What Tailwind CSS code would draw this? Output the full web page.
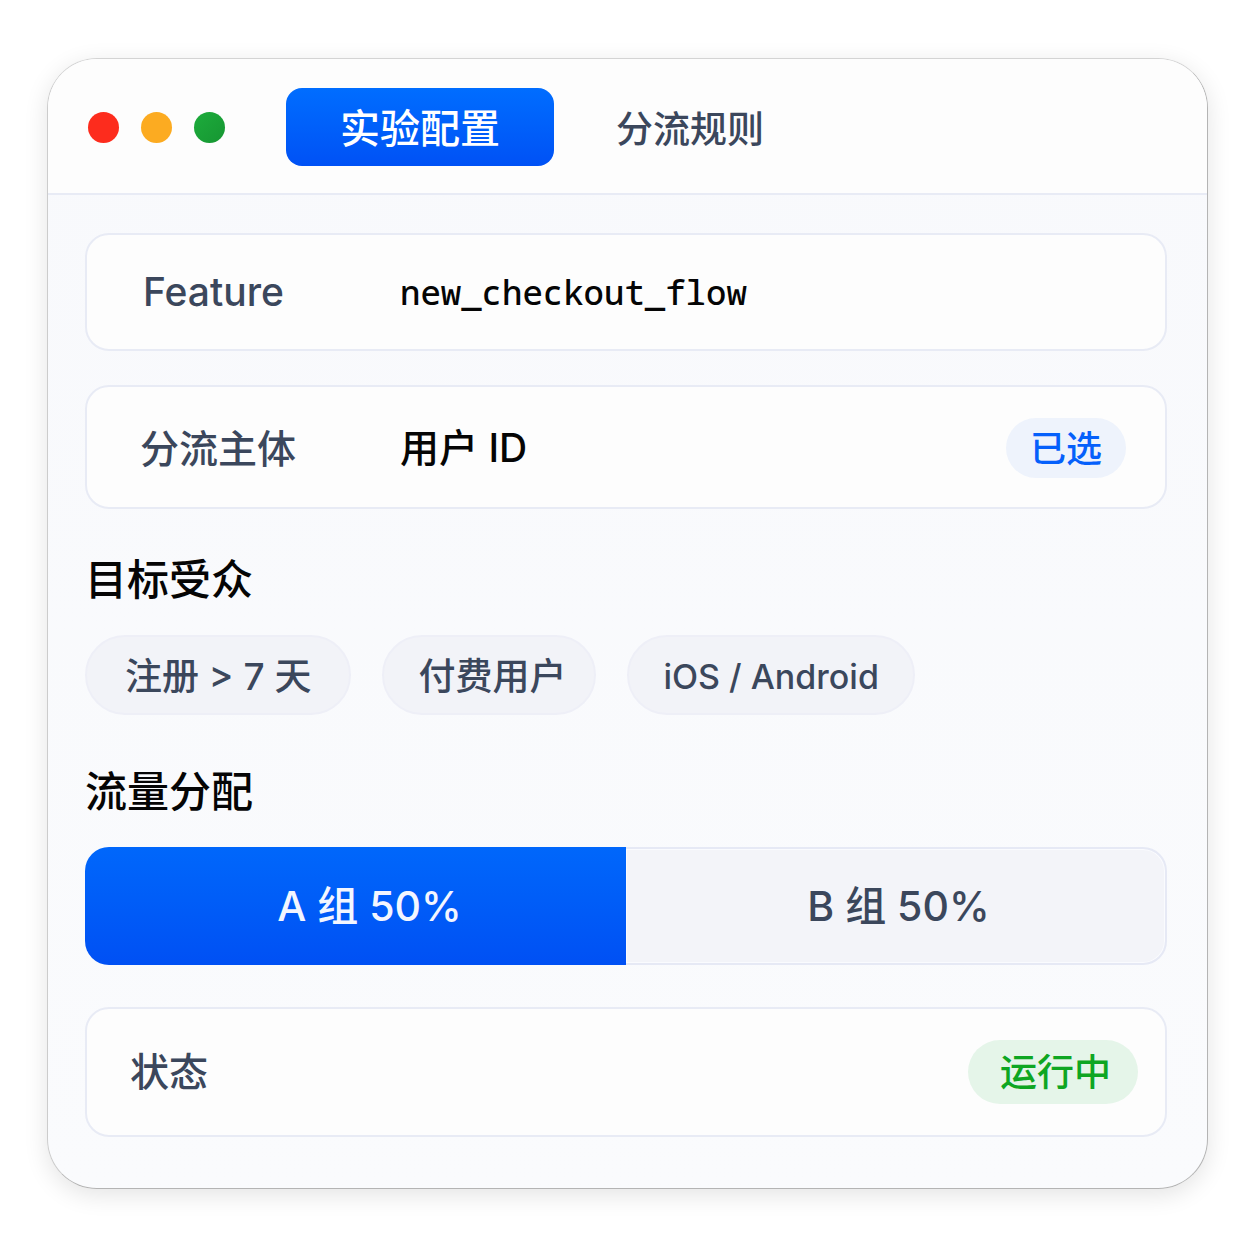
<!DOCTYPE html>
<html lang="zh-CN">
<head>
    <meta charset="UTF-8">
    <meta name="viewport" content="width=device-width, initial-scale=1.0">
    <title>实验配置</title>
    <script src="https://cdn.jsdelivr.net/npm/@tailwindcss/browser@4"></script>
</head>

<body class="min-h-screen bg-white pt-[58px] pr-[46px] pb-16 pl-[47px] font-[Inter,'Noto_Sans_CJK_SC',sans-serif] font-medium text-[#3b475c]">
    <div class="overflow-hidden rounded-[50px] border border-t-[#d4d4d4] border-r-[#b4b4b4] border-b-[#b4b4b4] border-l-[#cccccc] bg-linear-to-b from-[#f8f9fc] to-[#fafbfd] shadow-[0_6px_24px_rgba(0,0,0,0.11)]">
        <header class="flex items-center border-b-2 border-[#e8ebf5] bg-[#fdfdfd] px-10 pt-[29px] pb-[27px]">
            <div class="flex gap-[22px]">
                <span class="size-[31px] rounded-full bg-[#fd2c1d]"></span>
                <span class="size-[31px] rounded-full bg-[#fcab21]"></span>
                <span class="size-[31px] rounded-full bg-linear-to-br from-[#1dac3c] to-[#169632]"></span>
            </div>
            <nav class="ml-[61px] flex">
                <button type="button" class="h-[78px] rounded-2xl bg-linear-to-b from-[#006dff] to-[#0051f5] px-[54px] pt-1 text-[40px] leading-12 text-white">实验配置</button>
                <button type="button" class="h-[78px] px-[62px] pt-1.5 text-[37px] leading-12">分流规则</button>
            </nav>
        </header>

        <main class="pt-[38px] pr-10 pb-[51px] pl-[37px]">
            <dl>
                <div class="flex h-[118px] items-center rounded-3xl border-2 border-[#e8ebf5] bg-[#fdfdfd] px-14">
                    <dt class="w-[257px] text-[39px] leading-12">Feature</dt>
                    <dd class="font-['Noto_Sans_Mono','DejaVu_Sans_Mono',monospace] text-[34px] leading-12 text-[#050505]">new_checkout_flow</dd>
                </div>
                <div class="mt-[34px] flex h-[124px] items-center rounded-3xl border-2 border-[#e8ebf5] bg-[#fdfdfd] pr-[39px] pl-[53px]">
                    <dt class="w-[260px] pt-1 text-[39px] leading-12">分流主体</dt>
                    <dd class="flex flex-1 items-center justify-between pt-0.5 text-[39px] leading-12 text-[#050505]">
                        用户 ID
                        <span class="rounded-full bg-[#eef3fc] px-6 pt-[7px] pb-[5px] text-[36px] text-[#0560fb]">已选</span>
                    </dd>
                </div>
            </dl>

            <h2 class="mt-[47px] text-[42px] leading-12 text-[#050505]">目标受众</h2>
            <ul class="mt-[31px] flex gap-[31px] text-[37px] leading-12">
                <li class="rounded-full border-2 border-[#eeeff7] bg-[#f2f3f8] px-[38px] py-3.5 pt-4 pb-3">注册 &gt; 7 天</li>
                <li class="rounded-full border-2 border-[#eeeff7] bg-[#f2f3f8] pr-7 pl-[34px] pt-4 pb-3">付费用户</li>
                <li class="rounded-full border-2 border-[#eeeff7] bg-[#f2f3f8] px-[34px] pt-4 pb-3 text-[34px] leading-12">iOS / Android</li>
            </ul>

            <h2 class="mt-[53px] text-[42px] leading-12 text-[#050505]">流量分配</h2>
            <div class="mt-[31px] flex h-[118px] text-[41px] leading-12">
                <div class="flex items-center justify-center rounded-l-3xl bg-linear-to-b from-[#0067fb] to-[#0050f4] pl-7 text-[#f3f6ff]" style="width: 50%">A 组 50%</div>
                <div class="flex items-center justify-center rounded-r-3xl border-2 border-l-0 border-[#e6e9f5] bg-[#f3f4f9] pl-1.5 inset-shadow-[0_0_0_1px_#fafbfe]" style="width: 50%">B 组 50%</div>
            </div>

            <dl class="mt-[42px]">
                <div class="flex h-[130px] items-center justify-between rounded-3xl border-2 border-[#e8ebf5] bg-[#fdfdfd] pr-[27px] pl-[43px]">
                    <dt class="text-[39px] leading-12">状态</dt>
                    <dd class="rounded-full bg-[#e5f5e9] pr-[27px] pl-8 pt-[9px] pb-[7px] text-[37px] leading-12 text-[#0ea622]">运行中</dd>
                </div>
            </dl>
        </main>
    </div>
</body>

</html>
